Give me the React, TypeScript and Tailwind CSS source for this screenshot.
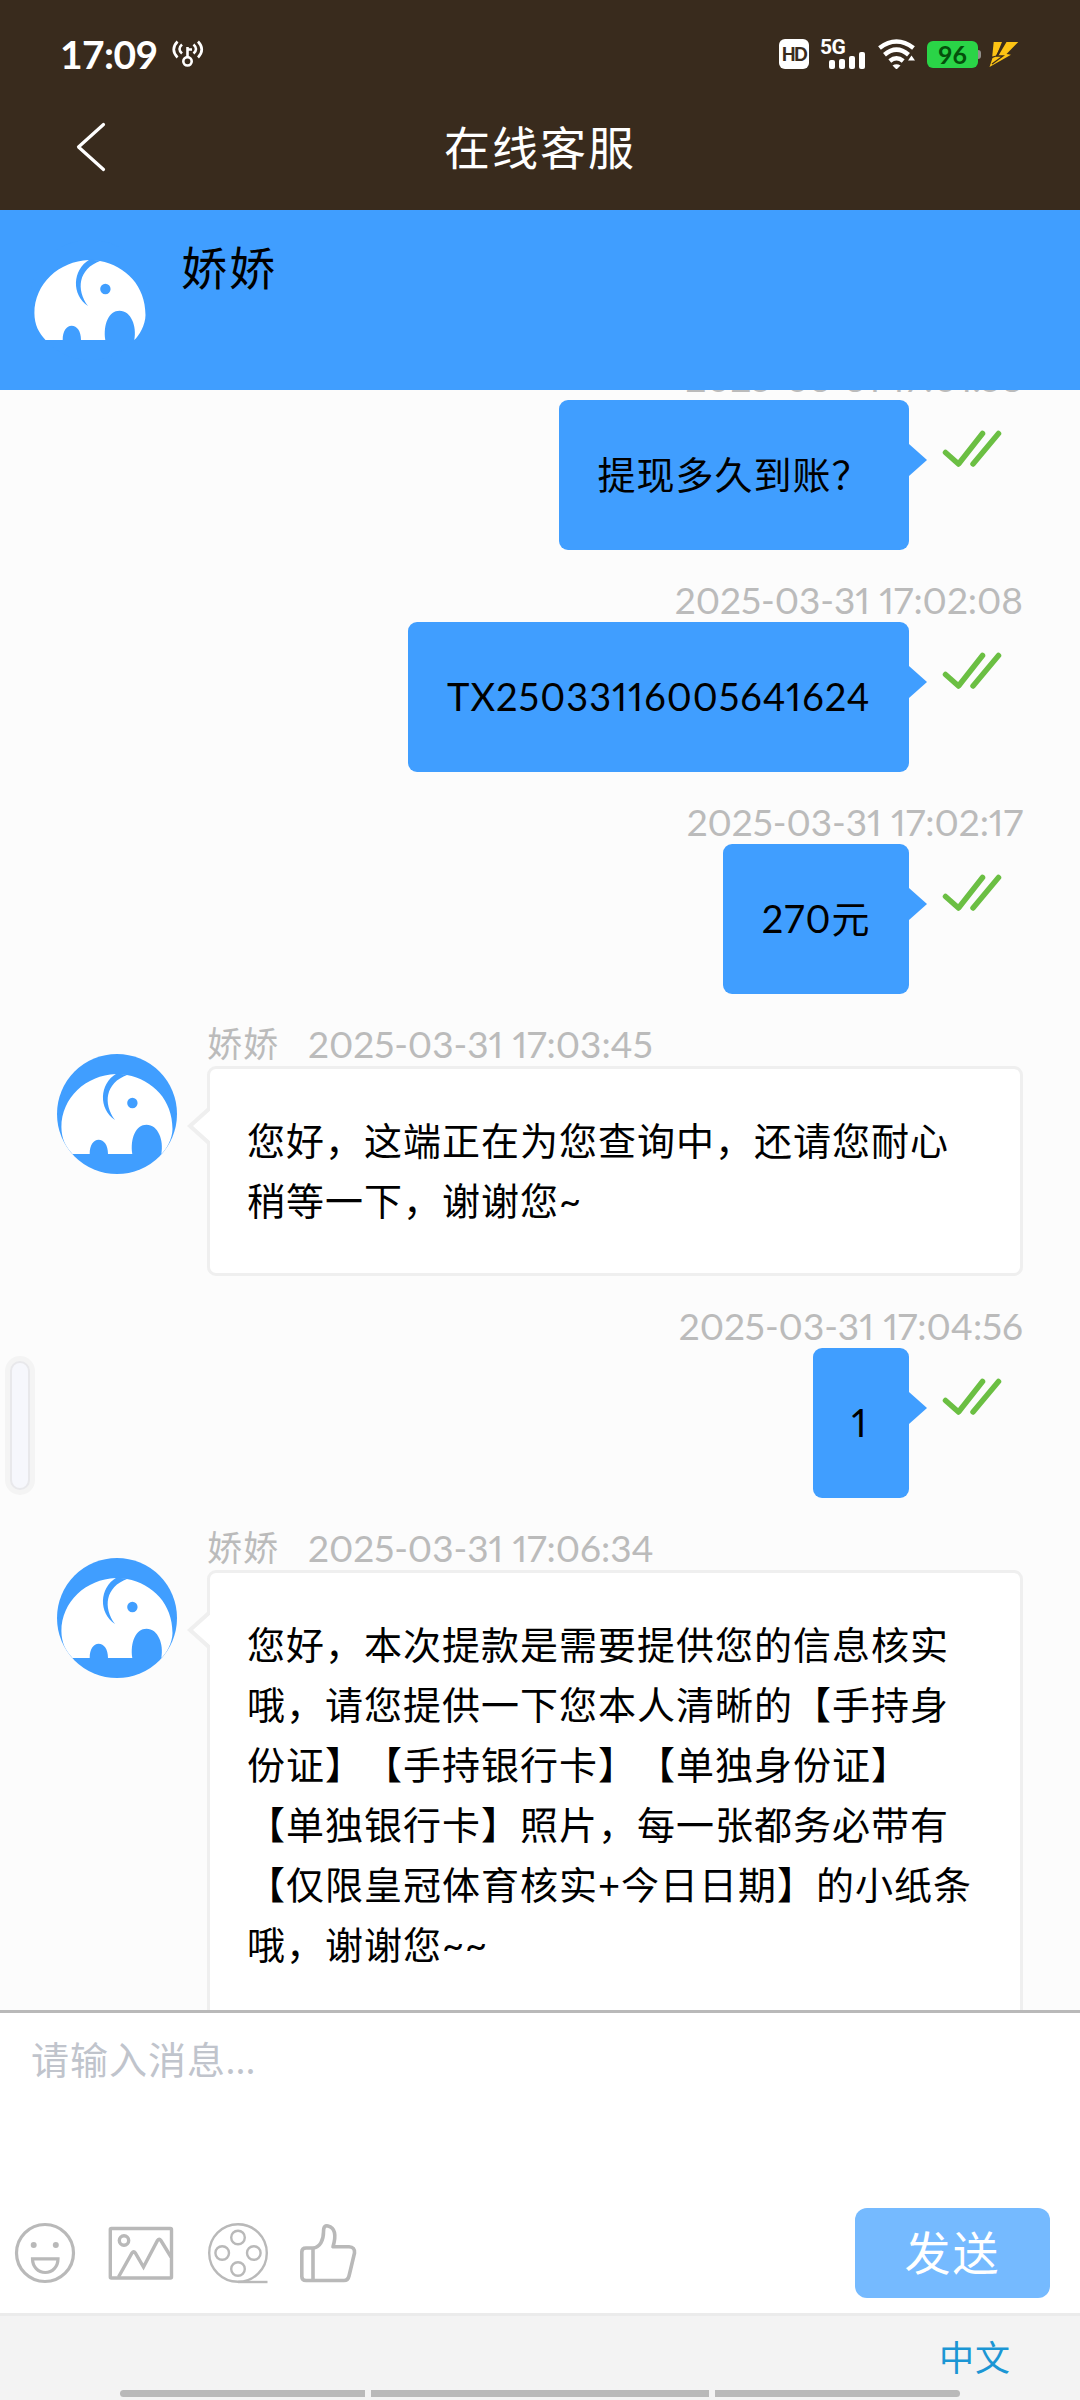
type Message = {
  id: number;
  from: "me" | "agent";
  time: string;
  lines: string[];
};

const AGENT_NAME = "娇娇";

const MESSAGES: Message[] = [
  { id: 1, from: "me", time: "2025-03-31 17:01:58", lines: ["提现多久到账？"] },
  { id: 2, from: "me", time: "2025-03-31 17:02:08", lines: ["TX25033116005641624"] },
  { id: 3, from: "me", time: "2025-03-31 17:02:17", lines: ["270元"] },
  {
    id: 4,
    from: "agent",
    time: "2025-03-31 17:03:45",
    lines: ["您好，这端正在为您查询中，还请您耐心", "稍等一下，谢谢您~"],
  },
  { id: 5, from: "me", time: "2025-03-31 17:04:56", lines: ["1"] },
  {
    id: 6,
    from: "agent",
    time: "2025-03-31 17:06:34",
    lines: [
      "您好，本次提款是需要提供您的信息核实",
      "哦，请您提供一下您本人清晰的【手持身",
      "份证】【手持银行卡】【单独身份证】",
      "【单独银行卡】照片，每一张都务必带有",
      "【仅限皇冠体育核实+今日日期】的小纸条",
      "哦，谢谢您~~",
    ],
  },
];

function ElephantAvatar() {
  return (
    <svg viewBox="0 0 120 120" className="size-[120px] shrink-0">
      <circle cx="60" cy="60" r="60" fill="#409eff" />
      <path
        fill="#fff"
        d="M58.8 20C29 21 4.4 44 4.4 73C4.4 85 9 93 15.5 100H32.7C32.7 91 36.5 85.7 41.6 85.7C47 85.7 51 91 51 100H75.3C73 84 79 70.7 89.5 70.7C101 70.7 107 86 104.3 100C109 96 115.5 85 115.5 75C115.5 46 96 26 69.9 21Z"
      />
      <path fill="#409eff" d="M59.5 19.5C42 30 41.5 55 58 66C46 50 48 29 70.5 20.8Z" />
      <circle cx="75.4" cy="49" r="5.2" fill="#409eff" />
    </svg>
  );
}

function StatusBar() {
  return (
    <div className="flex h-[108px] items-center justify-between pl-[60px] pr-[61px]">
      <div className="flex items-center">
        <span className="text-[39px] font-bold leading-none tracking-[-0.6px]">17:09</span>
        <svg viewBox="0 0 32 28" className="ml-[14px] h-7 w-8" fill="none" stroke="#fff" strokeWidth="2.6">
          <circle cx="15.500" cy="21.3" r="4.2" />
          <path d="M15.500 17V7M15.500 9.500h4.5" />
          <path d="M10 4.500q-5 4.500 0 9M21.500 4.500q5 4.500 0 9" />
          <path d="M5.500 1.500q-7.500 8 0 16M26 1.500q7.500 8 0 16" />
        </svg>
      </div>
      <div className="flex items-center">
        <div className="flex size-[30px] items-center justify-center rounded-[6px] bg-white">
          <span className="text-[18px] font-black leading-none tracking-[-1.5px] text-[#392b1d]">HD</span>
        </div>
        <div className="ml-[11px] flex h-8 w-[46px] flex-col justify-between">
          <span className="h-4 font-['Roboto'] text-[21px] font-bold leading-[18px] tracking-[-0.5px]">5G</span>
          <div className="-mt-1 flex items-end justify-end gap-1 pb-px pr-[1.500px]">
            <div className="h-[9px] w-[6px] rounded-[2px] bg-white" />
            <div className="h-[10px] w-[6px] rounded-[2px] bg-white" />
            <div className="h-[13px] w-[6px] rounded-[2px] bg-white" />
            <div className="h-[17px] w-[6px] rounded-[2px] bg-white" />
          </div>
        </div>
        <svg viewBox="0 0 38 30" className="ml-3 h-[30px] w-[38px]">
          <g fill="none" stroke="#fff" strokeWidth="4.500">
            <path d="M1.500 9q17-13 34 0" />
            <path d="M6.500 15.700q12-10 24 0" />
            <path d="M11.800 22q6.700-5.500 13.400 0" />
          </g>
          <path fill="#fff" d="M14.500 26.500q4-2.500 8 0l-4 4Z" />
          <path fill="#fff" d="M30 21.500l3.500-5 3.500 5Z" />
        </svg>
        <div className="ml-[11px] flex items-center">
          <div className="flex h-[27px] w-[51px] items-center justify-center rounded-[6px] bg-[#2ad447]">
            <span className="text-[25px] font-bold leading-none text-[#04500b]">96</span>
          </div>
          <div className="h-[9px] w-[3px] rounded-r-sm bg-[#92908b]" />
        </div>
        <svg viewBox="0 0 30 25" className="ml-2 h-[25px] w-[30px]" fill="#fcc314">
          <path d="M4.700 0H13L7.500 13.500 3.200 14.500Z" />
          <path d="M17.500 0H29.300L17.500 12 22 12.800 0.500 25 3.500 16 9.500 13.500Z" />
          <path d="M15 0L7.500 14H14L3 22" stroke="#392b1d" strokeWidth="1.300" fill="none" />
        </svg>
      </div>
    </div>
  );
}

function DoubleCheck() {
  return (
    <svg viewBox="0 0 60 38" className="h-[38px] w-[60px]" fill="none" stroke="#6bbf43" strokeWidth="5.500" strokeLinecap="round" strokeLinejoin="round">
      <path d="M3.500 22.500L16.500 34 40.500 3.500M31 34L56.500 3.500" />
    </svg>
  );
}

function Lines({ lines }: { lines: string[] }) {
  return (
    <div className="-mt-px mb-px text-[38px] leading-[60px] tracking-[1px] text-black">
      {lines.map((line) => (
        <p key={line} className="whitespace-nowrap">
          {line}
        </p>
      ))}
    </div>
  );
}

function MyMessage({ message }: { message: Message }) {
  return (
    <div className="mb-[27px] flex flex-col items-end pr-[57px]">
      <time className="h-[45px] text-[37px] leading-[45px] tracking-[-0.05px] proportional-nums text-[#bbb]">{message.time}</time>
      <div className="flex items-start">
        <div className="min-w-24 rounded-[9px] bg-[#409eff] px-[38.500px] py-[45px] proportional-nums">
          <Lines lines={message.lines} />
        </div>
        <svg viewBox="0 0 18 32" className="mt-11 h-8 w-[18px]" fill="#409eff">
          <path d="M0 0L18 16 0 32Z" />
        </svg>
        <div className="ml-[15px] mr-[21px] mt-[30px]">
          <DoubleCheck />
        </div>
      </div>
    </div>
  );
}

function AgentMessage({ message }: { message: Message }) {
  return (
    <div className="mb-[27px] flex items-start pl-[57px] pr-[57px]">
      <div className="mt-[33px]">
        <ElephantAvatar />
      </div>
      <div className="ml-[30px] w-[816px]">
        <div className="flex h-[45px] gap-[29px] leading-[45px] text-[#bbb]">
          <span className="text-[35px] tracking-[1px]">{AGENT_NAME}</span>
          <time className="text-[37px] tracking-[-0.05px] proportional-nums">{message.time}</time>
        </div>
        <div className="relative rounded-[9px] border-[3px] border-[#efefef] bg-white px-[37px] py-[42px]">
          <svg viewBox="0 0 24 40" className="absolute -left-6 top-[37px] h-10 w-6">
            <path d="M24 2L4 20 24 38" fill="#fff" stroke="#efefef" strokeWidth="4" />
          </svg>
          <Lines lines={message.lines} />
        </div>
      </div>
    </div>
  );
}

function Toolbar() {
  return (
    <div className="flex items-center text-[#b9b9b9]">
      <svg viewBox="0 0 62 62" className="size-[62px]" fill="none" stroke="currentColor" strokeWidth="3.200">
        <circle cx="31" cy="31" r="28.500" />
        <circle cx="19.700" cy="23" r="3" fill="currentColor" stroke="none" />
        <circle cx="41.800" cy="23" r="3" fill="currentColor" stroke="none" />
        <path d="M18.500 36.800h25.500c0 8-5.500 13.700-12.700 13.700S18.500 44.800 18.500 36.800Z" />
      </svg>
      <svg viewBox="0 0 66 54" className="ml-8 h-[54px] w-[66px]" fill="none" stroke="currentColor" strokeWidth="3.400">
        <rect x="2.300" y="2.500" width="61.200" height="49.500" rx="1" />
        <circle cx="16" cy="14.500" r="4.700" />
        <path d="M10.500 51L24 27q1.700-2.500 3.300 0L35.500 41 49.500 14.500q1.700-2.500 3.400 0L63 31" />
      </svg>
      <svg viewBox="0 0 62 62" className="ml-[33px] size-[62px]" fill="none" stroke="currentColor" strokeWidth="2.400">
        <circle cx="31" cy="31" r="28.800" />
        <circle cx="31" cy="15.500" r="6.800" />
        <circle cx="31" cy="47" r="6.800" />
        <circle cx="15.200" cy="31" r="6.800" />
        <circle cx="46.800" cy="31" r="6.800" />
        <path d="M31 60h29.500" />
      </svg>
      <svg viewBox="0 0 58 60" className="ml-[30px] h-[60px] w-[58px]" fill="none" stroke="currentColor" strokeWidth="3.600" strokeLinejoin="round">
        <path d="M7 25H14C21 24.500 24.500 17 24.500 9C24.500 3 26.500 2.500 29 3C36 4.500 37.500 12 34 23.700H50Q56 24 55.500 30L50 53Q49 57.500 45 57.500H7Q2.800 57.500 2.800 53.500V29Q2.800 25 7 25ZM14 25V57.500" />
      </svg>
    </div>
  );
}

export default function App() {
  return (
    <div className="relative flex h-[2400px] w-[1080px] flex-col overflow-hidden bg-white font-['Lato','Noto_Sans_CJK_SC',sans-serif] [text-spacing-trim:space-all]">
      <header className="h-[210px] shrink-0 bg-[#392b1d] text-white">
        <StatusBar />
        <div className="flex h-[78px] items-center pl-[75px] pr-[107px]">
          <svg viewBox="0 0 32 50" className="h-[50px] w-8" fill="none" stroke="#fff" strokeWidth="3.200" strokeLinecap="round" strokeLinejoin="round">
            <path d="M28.500 2.500L3.500 25 28.500 47.500" />
          </svg>
          <h1 className="flex-1 pt-[2px] text-center text-[46px] leading-none tracking-[2px]">在线客服</h1>
        </div>
      </header>

      <section className="flex h-[180px] shrink-0 items-start gap-[30px] bg-[#409eff] pl-[30px] pt-[30px]">
        <ElephantAvatar />
        <span className="pl-px text-[46px] leading-[56px] tracking-[2px] text-black">{AGENT_NAME}</span>
      </section>

      <main className="h-[1620px] shrink-0 overflow-hidden bg-[#fcfcfc]">
        {/* scrolled so the first timestamp sits mostly under the header */}
        <div className="-mt-[35px]">
          {MESSAGES.map((message) =>
            message.from === "me" ? (
              <MyMessage key={message.id} message={message} />
            ) : (
              <AgentMessage key={message.id} message={message} />
            ),
          )}
        </div>
      </main>

      <section className="flex h-[303px] shrink-0 flex-col justify-between border-t-[3px] border-[#b9b9b9] bg-white">
        <div className="px-[31px] pt-4 text-[38px] leading-[60px] tracking-[1px] text-[#c0c4cc]">请输入消息...</div>
        <div className="flex items-center justify-between pb-[15px] pl-[14px] pr-[30px]">
          <Toolbar />
          <button type="button" className="h-[90px] w-[195px] rounded-xl bg-[#75baff] pb-px text-[46px] leading-none tracking-[2px] text-white">
            发送
          </button>
        </div>
      </section>

      <footer className="flex flex-1 flex-col justify-between border-t-[3px] border-[#ebebeb] bg-[#f3f3f3] pb-[3px]">
        <a className="self-end pr-[69px] pt-[19px] text-[35px] leading-[45px] tracking-[1px] text-[#1b96d4]">中文</a>
        <div className="mx-[120px] flex h-[7px] gap-[6px]">
          <div className="w-[245px] rounded-l-full bg-[#b9b9b9]" />
          <div className="flex-1 bg-[#b9b9b9]" />
          <div className="w-[245px] rounded-r-full bg-[#b9b9b9]" />
        </div>
      </footer>

      {/* edge swipe handle, floats over the chat */}
      <div className="absolute left-[10px] top-[1361px] h-[129px] w-5 rounded-full border-2 border-[#e8e8eb] bg-[#f6f7fc] shadow-[0_0_0_5px_#f4f4f4]" />
    </div>
  );
}
